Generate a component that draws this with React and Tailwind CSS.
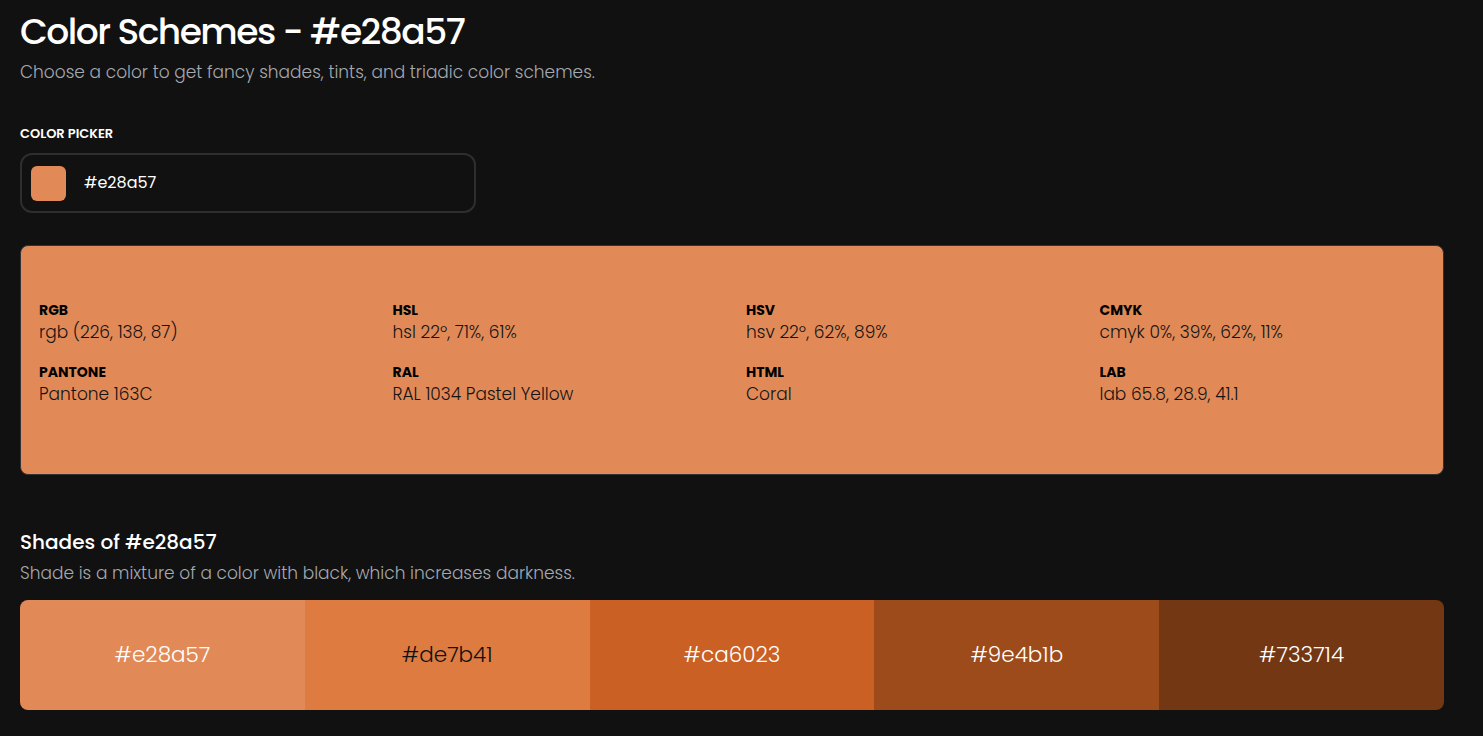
const font = { fontFamily: '"Poppins", "Open Sans", "Noto Sans", sans-serif' };

const info = [
  { label: 'RGB', value: 'rgb (226, 138, 87)' },
  { label: 'HSL', value: 'hsl 22º, 71%, 61%' },
  { label: 'HSV', value: 'hsv 22º, 62%, 89%' },
  { label: 'CMYK', value: 'cmyk 0%, 39%, 62%, 11%' },
  { label: 'PANTONE', value: 'Pantone 163C' },
  { label: 'RAL', value: 'RAL 1034 Pastel Yellow' },
  { label: 'HTML', value: 'Coral' },
  { label: 'LAB', value: 'lab 65.8, 28.9, 41.1' },
];

const shades = [
  { hex: '#e28a57', bg: 'bg-[#e28a57]', text: 'text-white' },
  { hex: '#de7b41', bg: 'bg-[#de7b41]', text: 'text-[#111]' },
  { hex: '#ca6023', bg: 'bg-[#ca6023]', text: 'text-white' },
  { hex: '#9e4b1b', bg: 'bg-[#9e4b1b]', text: 'text-white' },
  { hex: '#733714', bg: 'bg-[#733714]', text: 'text-white' },
];

export default function App() {
  return (
    <div className="min-h-screen bg-[#111111] pl-5 pr-[39px] pt-[10px] pb-6" style={font}>
      {/* Header */}
      <h1 className="text-[36px] leading-[44px] font-medium text-white tracking-[-1.5px]">
        Color Schemes - #e28a57
      </h1>
      <p className="mt-[6px] text-[17px] leading-6 font-light text-[#a5a9b0]">
        Choose a color to get fancy shades, tints, and triadic color schemes.
      </p>

      {/* Picker */}
      <div className="mt-[42px] text-[13px] leading-4 font-semibold text-white uppercase">Color picker</div>
      <div className="mt-[11px] w-[456px] h-[60px] rounded-xl border-2 border-[#2e2e2e] flex items-center pl-[9px] gap-[18px]">
        <div className="w-[35px] h-[35px] rounded-md bg-[#e28a57]" />
        <span className="text-[16px] text-white">#e28a57</span>
      </div>

      {/* Info card */}
      <div className="mt-[32px] h-[230px] rounded-lg bg-[#e28a57] border border-[#333333] px-[18px] pt-[54px]">
        <div className="grid grid-cols-4 gap-x-7 gap-y-[18px]">
          {info.map((it) => (
            <div key={it.label}>
              <div className="text-[14px] leading-5 font-bold text-black">{it.label}</div>
              <div className="text-[17px] leading-6 font-light text-[#141414]">{it.value}</div>
            </div>
          ))}
        </div>
      </div>

      {/* Shades */}
      <h2 className="mt-[53px] text-[20px] leading-7 font-medium text-white">Shades of #e28a57</h2>
      <p className="mt-[5px] text-[17px] leading-6 font-light text-[#a5a9b0]">
        Shade is a mixture of a color with black, which increases darkness.
      </p>
      <div className="mt-[15px] flex h-[110px] rounded-lg overflow-hidden">
        {shades.map((s) => (
          <div key={s.hex} className={`flex-1 flex items-center justify-center ${s.bg}`}>
            <span className={`text-[21.5px] font-light ${s.text}`}>{s.hex}</span>
          </div>
        ))}
      </div>
    </div>
  );
}
